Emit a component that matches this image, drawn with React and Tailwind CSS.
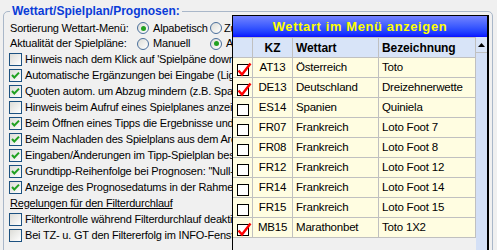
import React from "react";

const options = [
  { text: "Hinweis nach dem Klick auf 'Spielpäne downloaden' anzeigen", checked: false },
  { text: "Automatische Ergänzungen bei Eingabe (Liga, Datum)", checked: true },
  { text: "Quoten autom. um Abzug mindern (z.B. Spanien)", checked: true },
  { text: "Hinweis beim Aufruf eines Spielplanes anzeigen", checked: false },
  { text: "Beim Öffnen eines Tipps die Ergebnisse und Quoten laden", checked: true },
  { text: "Beim Nachladen des Spielplans aus dem Archiv fragen", checked: true },
  { text: "Eingaben/Änderungen im Tipp-Spielplan bestätigen", checked: true },
  { text: 'Grundtipp-Reihenfolge bei Prognosen: "Null-Eins-Zwei"', checked: true },
  { text: "Anzeige des Prognosedatums in der Rahmenleiste", checked: true },
];

const filterOptions = [
  { text: "Filterkontrolle während Filterdurchlauf deaktivieren", checked: false },
  { text: "Bei TZ- u. GT den Filtererfolg im INFO-Fenster anzeigen", checked: false },
];

const wettarten = [
  { kz: "AT13", land: "Österreich", name: "Toto", on: true },
  { kz: "DE13", land: "Deutschland", name: "Dreizehnerwette", on: true },
  { kz: "ES14", land: "Spanien", name: "Quiniela", on: false },
  { kz: "FR07", land: "Frankreich", name: "Loto Foot 7", on: false },
  { kz: "FR08", land: "Frankreich", name: "Loto Foot 8", on: false },
  { kz: "FR12", land: "Frankreich", name: "Loto Foot 12", on: false },
  { kz: "FR14", land: "Frankreich", name: "Loto Foot 14", on: false },
  { kz: "FR15", land: "Frankreich", name: "Loto Foot 15", on: false },
  { kz: "MB15", land: "Marathonbet", name: "Toto 1X2", on: true },
];

function XpCheck({ checked }) {
  return (
    <span className="w-[13px] h-[13px] shrink-0 border border-[#1c5180] bg-linear-to-br from-[#dcdcd7] to-white flex items-center justify-center">
      {checked && (
        <svg width="11" height="11" viewBox="0 0 11 11">
          <path d="M2 5 L4.3 7.5 L9 2.6" fill="none" stroke="#21a121" strokeWidth="2" />
        </svg>
      )}
    </span>
  );
}

function XpRadio({ checked }) {
  return (
    <span className="w-[12px] h-[12px] shrink-0 rounded-full border border-[#4a6f9c] bg-linear-to-br from-[#dcdcd7] to-white flex items-center justify-center">
      {checked && <span className="w-[5px] h-[5px] rounded-full bg-[#21a121]" />}
    </span>
  );
}

function RedCheck({ on }) {
  return (
    <div className="relative w-[12px] h-[12px] border border-black bg-white mt-[6px] ml-[4px]">
      {on && (
        <svg className="absolute -left-[1px] -top-[3px]" width="15" height="15" viewBox="0 0 15 15">
          <path d="M1.5 8.5 L5 12.5 L13.5 1.5" fill="none" stroke="#ff0000" strokeWidth="2.4" />
        </svg>
      )}
    </div>
  );
}

export default function App() {
  return (
    <div className="relative w-[497px] h-[250px] overflow-hidden bg-[#f0f0f0] font-['Liberation_Sans',Arial,sans-serif] text-[11px] tracking-[-0.2px] text-black">
      <div className="relative ml-[3px] mt-[11px] w-[490px] h-[260px] border border-[#a9b7c9] rounded-[5px]">
        <div className="absolute -top-[8px] left-[6px] px-[2px] bg-[#f0f0f0] text-[12px] font-bold tracking-normal text-[#0a3cd8] leading-[14px]">
          Wettart/Spielplan/Prognosen:
        </div>

        <div className="w-[484px] overflow-hidden pt-[8px]">
          <div className="h-[16px] flex items-center pl-[6px]">
            <span className="w-[127px]">Sortierung Wettart-Menü:</span>
            <span className="w-[73px] flex items-center gap-[4px]">
              <XpRadio checked />
              Alpabetisch
            </span>
            <span className="flex items-center gap-[2px] whitespace-nowrap">
              <XpRadio />
              Zuletzt benutzt
            </span>
          </div>
          <div className="h-[15px] flex items-center pl-[6px]">
            <span className="w-[127px]">Aktualität der Spielpläne:</span>
            <span className="w-[73px] flex items-center gap-[4px]">
              <XpRadio />
              Manuell
            </span>
            <span className="flex items-center gap-[4px] whitespace-nowrap">
              <XpRadio checked />
              Automatisch
            </span>
          </div>

          {options.map((o) => (
            <div key={o.text} className="h-[16px] flex items-center gap-[3px] pl-[5px] whitespace-nowrap">
              <XpCheck checked={o.checked} />
              {o.text}
            </div>
          ))}

          <div className="h-[16px] flex items-center pl-[6px] underline whitespace-nowrap">
            Regelungen für den Filterdurchlauf
          </div>

          {filterOptions.map((o) => (
            <div key={o.text} className="h-[16px] flex items-center gap-[3px] pl-[5px] whitespace-nowrap">
              <XpCheck checked={o.checked} />
              {o.text}
            </div>
          ))}
        </div>
      </div>

      {/* popup: Wettart im Menü anzeigen */}
      <div className="absolute left-[232px] top-[15px] w-[257px] h-[240px] border-l border-t border-r-2 border-black bg-[#f0f0f0] flex flex-col">
        <div className="h-[21px] shrink-0 bg-linear-to-b from-[#7482ff] to-[#0a0aff] flex items-center justify-center text-[13px] font-bold tracking-[0.6px] text-[#ffff00]">
          Wettart im Menü anzeigen
        </div>
        <div className="flex flex-1">
          <div className="w-[243px] flex flex-col">
            <div className="h-[21px] flex bg-[#d8e4f8] border-t border-[#c0c0c0] font-bold text-[12px] tracking-[-0.1px]">
              <div className="w-[20px] border-r border-b border-[#c0c0c0]" />
              <div className="w-[40px] border-r border-b border-[#c0c0c0] flex items-center justify-center">KZ</div>
              <div className="w-[86px] border-r border-b border-[#c0c0c0] flex items-center pl-[3px]">Wettart</div>
              <div className="w-[97px] border-r border-b border-[#c0c0c0] flex items-center pl-[3px]">Bezeichnung</div>
            </div>
            {wettarten.map((w) => (
              <div key={w.kz} className="h-[20px] flex bg-[#fffde1] text-[11.5px]">
                <div className="w-[20px] border-r border-b border-[#c0c0c0]">
                  <RedCheck on={w.on} />
                </div>
                <div className="w-[40px] border-r border-b border-[#c0c0c0] flex items-center justify-center">{w.kz}</div>
                <div className="w-[86px] border-r border-b border-[#c0c0c0] flex items-center pl-[3px]">{w.land}</div>
                <div className="w-[97px] border-r border-b border-[#c0c0c0] flex items-center pl-[3px]">{w.name}</div>
              </div>
            ))}
          </div>
          <div className="w-[11px] bg-[#d4e0f6]">
            <div className="h-[15px] mt-[1px] border-b border-[#c0c0c0] bg-[#d8e4f8] flex items-center justify-center">
              <svg width="7" height="4" viewBox="0 0 7 4">
                <path d="M0 4 L3.5 0 L7 4 Z" fill="#000" />
              </svg>
            </div>
          </div>
        </div>
      </div>
    </div>
  );
}
